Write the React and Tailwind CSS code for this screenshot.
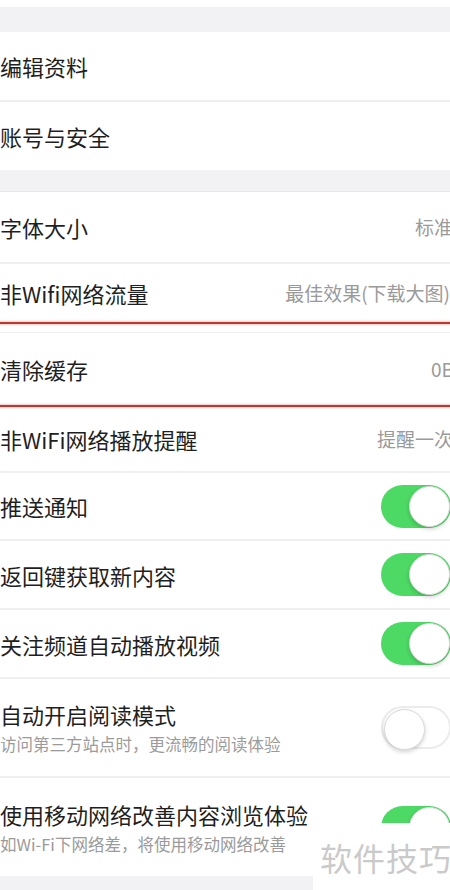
import { ChevronRight } from "lucide-react";

function Toggle({ on }) {
  return (
    <div
      className={`shrink-0 w-[70px] h-[43px] rounded-full relative -mr-[1px] ${
        on ? "bg-[#4cd964]" : "bg-white border-2 border-[#ececec]"
      }`}
    >
      <div
        className={`absolute top-[1px] w-[41px] h-[41px] rounded-full bg-white border border-[#d9d9d9] shadow-[0_2px_4px_rgba(0,0,0,0.18)] ${
          on ? "right-[1px]" : "left-[1px] -top-[1px]"
        }`}
      ></div>
    </div>
  );
}

function Row({ label, sub, value, valueMr = "", chevron, toggle, h, border = true }) {
  return (
    <div
      className={`${h} bg-white flex items-center justify-between overflow-hidden ${
        border ? "border-b-2 border-[#efeff1]" : ""
      }`}
    >
      <div className="flex flex-col">
        <span className="text-[22px] leading-[30px] text-[#1f1f1f] whitespace-nowrap">{label}</span>
        {sub && (
          <span className="text-[16.5px] leading-[24px] mt-[3px] text-[#9b9b9b] whitespace-nowrap">
            {sub}
          </span>
        )}
      </div>
      {value && (
        <span className={`text-[19px] text-[#9a9a9a] whitespace-nowrap shrink-0 ${valueMr}`}>
          {value}
        </span>
      )}
      {chevron && <ChevronRight className="shrink-0 -mr-[17px] text-[#c7c7cc]" size={22} strokeWidth={2} />}
      {toggle !== undefined && <Toggle on={toggle} />}
    </div>
  );
}

function RedLine() {
  return <div className="h-[2px] bg-[#b83a30] shadow-[0_0_2px_1px_rgba(230,150,150,0.5)] relative z-10"></div>;
}

export default function App() {
  return (
    <div className="w-[450px] h-[890px] overflow-hidden bg-[#f2f2f4] relative font-['Noto_Sans_CJK_SC','Noto_Sans',sans-serif]">
      <div className="h-[7px] bg-white"></div>
      <div className="h-[25px]"></div>

      <Row h="h-[70px]" label="编辑资料" chevron />
      <Row h="h-[68px]" label="账号与安全" chevron border={false} />

      <div className="h-[22px] border-b border-[#e8e8ea]"></div>

      <Row h="h-[72px]" label="字体大小" value="标准" valueMr="-mr-[3px]" />
      <Row h="h-[58px]" label="非Wifi网络流量" value="最佳效果(下载大图)" border={false} />
      <RedLine />
      <div className="h-[9px] bg-white border-b border-[#efeff1]"></div>
      <Row h="h-[72px]" label="清除缓存" value="0B" valueMr="-mr-[4px]" border={false} />
      <RedLine />
      <Row h="h-[66px]" label="非WiFi网络播放提醒" value="提醒一次" valueMr="-mr-[3px]" />
      <Row h="h-[68px]" label="推送通知" toggle={true} />
      <Row h="h-[69px]" label="返回键获取新内容" toggle={true} />
      <Row h="h-[69px]" label="关注频道自动播放视频" toggle={true} />
      <Row h="h-[99px]" label="自动开启阅读模式" sub="访问第三方站点时，更流畅的阅读体验" toggle={false} />
      <Row h="h-[98px]" label="使用移动网络改善内容浏览体验" sub="如Wi-Fi下网络差，将使用移动网络改善" toggle={true} border={false} />

      <div className="absolute right-0 bottom-0 w-[137px] h-[67px] bg-white flex items-center pl-[7px]">
        <span className="text-[32px] text-[#cacaca] whitespace-nowrap tracking-[1px]">软件技巧</span>
      </div>
    </div>
  );
}
